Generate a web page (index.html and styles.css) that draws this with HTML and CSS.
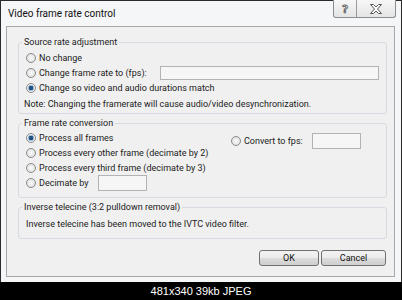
FILE: index.html
```html
<!DOCTYPE html>
<html lang="en">
<head>
  <meta charset="UTF-8">
  <title>Video frame rate control</title>
  <link rel="stylesheet" href="styles.css">
</head>
<body>
  <div class="window">
    <div class="titlebar">
      <span class="title">Video frame rate control</span>
      <div class="caption-buttons">
        <div class="cap-btn help">?</div>
        <div class="cap-btn close">
          <svg width="12" height="10" viewBox="0 0 12 10">
            <polygon points="0.5,0.5 3.5,0.5 6,3 8.5,0.5 11.5,0.5 7.5,5 11.5,9.5 8.5,9.5 6,7 3.5,9.5 0.5,9.5 4.5,5" fill="#fff" stroke="#555" stroke-width="1"/>
          </svg>
        </div>
      </div>
    </div>

    <div class="client">
      <!-- Source rate -->
      <fieldset class="group source">
        <legend>Source rate adjustment</legend>
        <div class="row"><span class="radio"></span>No change</div>
        <div class="row"><span class="radio"></span>Change frame rate to (fps):<span class="field wide"></span></div>
        <div class="row"><span class="radio checked"></span>Change so video and audio durations match</div>
        <div class="note">Note: Changing the framerate will cause audio/video desynchronization.</div>
      </fieldset>

      <!-- Frame rate conversion -->
      <fieldset class="group conversion">
        <legend>Frame rate conversion</legend>
        <div class="columns">
          <div class="col">
            <div class="row"><span class="radio checked"></span>Process all frames</div>
            <div class="row"><span class="radio"></span>Process every other frame (decimate by 2)</div>
            <div class="row"><span class="radio"></span>Process every third frame (decimate by 3)</div>
            <div class="row tall"><span class="radio"></span>Decimate by<span class="field small"></span></div>
          </div>
          <div class="col right">
            <div class="row tall"><span class="radio"></span>Convert to fps:<span class="field small"></span></div>
          </div>
        </div>
      </fieldset>

      <!-- IVTC -->
      <fieldset class="group ivtc">
        <legend>Inverse telecine (3:2 pulldown removal)</legend>
        <div class="text">Inverse telecine has been moved to the IVTC video filter.</div>
      </fieldset>

      <div class="buttons">
        <button class="btn ok">OK</button>
        <button class="btn cancel">Cancel</button>
      </div>
    </div>
  </div>

  <div class="caption">481x340 39kb JPEG</div>
</body>
</html>
```

FILE: styles.css
```css
* {
  box-sizing: border-box;
}

body {
  margin: 0;
  width: 402px;
  height: 300px;
  overflow: hidden;
  background-color: #000000;
  font-family: Roboto, "Noto Sans", sans-serif;
  font-size: 9px;
  color: #1b1b1b;
  display: flex;
  flex-direction: column;
}

/* Janela */
.window {
  height: 283px;
  border: 1px solid #2b2b2b;
  border-bottom: none;
  background-color: #f5f6f7;
  padding: 0 6px 5px 5px;
  display: flex;
  flex-direction: column;
}

.titlebar {
  height: 25px;
  display: flex;
  justify-content: space-between;
  align-items: flex-start;
}

.title {
  padding-left: 2px;
  line-height: 26px;
  font-size: 10px;
  color: #111;
}

.caption-buttons {
  display: flex;
  margin: -1px -1px 0 0;
  height: 18px;
  border: 1px solid #8d8d8d;
  border-top: none;
  border-radius: 0 0 3px 3px;
  background: linear-gradient(#f7f7f7, #e4e4e4);
}

.cap-btn {
  display: flex;
  justify-content: center;
  align-items: center;
}

.help {
  width: 23px;
  border-right: 1px solid #9a9a9a;
  font-family: "Noto Sans", sans-serif;
  font-weight: bold;
  font-size: 11px;
  color: #f4f4f4;
  -webkit-text-stroke: 0.8px #555;
}

.close {
  width: 38px;
}

.client {
  flex: 1;
  border: 1px solid #a8a8a8;
  background-color: #f0f0f0;
  display: flex;
  flex-direction: column;
}

/* Group boxes */
.group {
  margin: 3px 7px 0 11px;
  border: 1px solid #d5dbe0;
  border-radius: 3px;
  padding: 2px 7px 2px;
  min-width: 0;
}

.group.source {
  margin-top: 9px;
}

.group legend {
  padding: 0 2px;
  margin-left: -4px;
  line-height: 12px;
}

.row {
  display: flex;
  align-items: center;
  height: 15px;
  gap: 3px;
  white-space: nowrap;
}

.row.tall {
  height: 16px;
}

.radio {
  flex: none;
  width: 10px;
  height: 10px;
  border-radius: 50%;
  border: 1px solid #8b8b8b;
  background: radial-gradient(circle at 50% 50%, #fbfbfb, #d8d8d8);
}

.radio.checked {
  background: radial-gradient(circle at 50% 50%, #22507c 0 2px, #a8c4de 2.6px 3px, #f3f3f3 3.6px);
}

.field {
  display: inline-block;
  height: 14px;
  border: 1px solid #b3b3b3;
  background-color: #f6f6f6;
}

.field.wide {
  width: 219px;
  margin-left: auto;
}

.field.small {
  width: 49px;
  height: 16px;
  margin-left: 6px;
}

.note {
  margin: 2px 0 0 -2px;
  height: 14px;
  line-height: 14px;
  white-space: nowrap;
}

.conversion {
  padding-top: 1px;
  padding-bottom: 6px;
}

.columns {
  display: grid;
  grid-template-columns: 205px 1fr;
}

.col.right {
  padding-top: 3px;
}

.ivtc {
  padding: 5px 7px 8px;
}

.text {
  line-height: 12px;
  white-space: nowrap;
}

/* Botões */
.buttons {
  display: flex;
  justify-content: flex-end;
  gap: 2px;
  margin: 11px 8px 0 0;
}

.btn {
  height: 16px;
  padding: 0;
  font-family: Roboto, "Noto Sans", sans-serif;
  font-size: 9px;
  color: #111;
  border: 1px solid #707070;
  border-radius: 3px;
  background: linear-gradient(#f2f2f2 0%, #ebebeb 50%, #dddddd 50%, #cfcfcf 100%);
}

.btn.ok {
  width: 60px;
}

.btn.cancel {
  width: 65px;
}

.caption {
  flex: 1;
  text-align: center;
  color: #ffffff;
  font-family: "Liberation Sans", Arial, sans-serif;
  font-size: 11px;
  line-height: 17px;
  padding-top: 1px;
}
```
